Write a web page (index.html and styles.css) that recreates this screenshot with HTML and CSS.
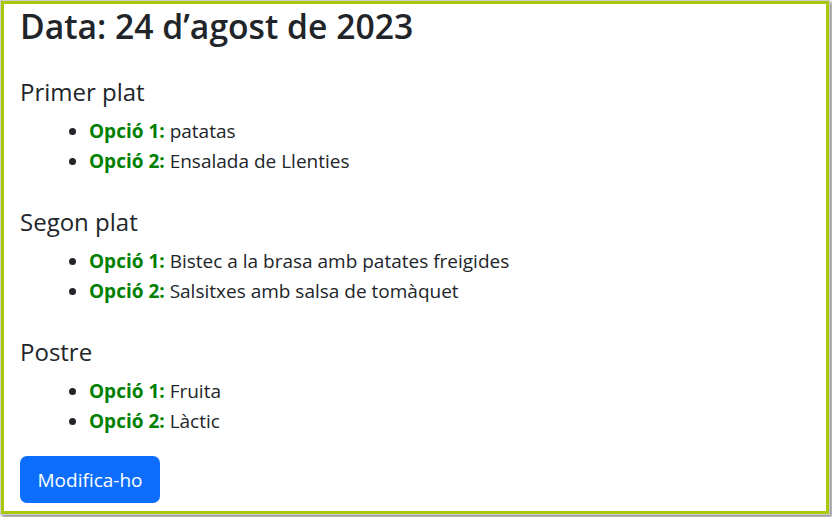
FILE: index.html
```html
<!DOCTYPE html>
<html lang="ca">
<head>
<meta charset="utf-8">
<title>Menú</title>
<link rel="stylesheet" href="styles.css">
</head>
<body>
<div class="frame">
  <h1 class="title">Data: 24 d’agost de 2023</h1>
  <h2 class="course">Primer plat</h2>
  <ul class="options">
    <li><strong class="opt">Opció 1:</strong> patatas</li>
    <li><strong class="opt">Opció 2:</strong> Ensalada de Llenties</li>
  </ul>
  <h2 class="course">Segon plat</h2>
  <ul class="options">
    <li><strong class="opt">Opció 1:</strong> Bistec a la brasa amb patates freigides</li>
    <li><strong class="opt">Opció 2:</strong> Salsitxes amb salsa de tomàquet</li>
  </ul>
  <h2 class="course">Postre</h2>
  <ul class="options">
    <li><strong class="opt">Opció 1:</strong> Fruita</li>
    <li><strong class="opt">Opció 2:</strong> Làctic</li>
  </ul>
  <button class="btn" type="button">Modifica-ho</button>
</div>
</body>
</html>
```
FILE: styles.css
```css
html, body {
  margin: 0;
  padding: 0;
  background: #ffffff;
}
body {
  font-family: "Open Sans", "Noto Sans", sans-serif;
  color: #212529;
  width: 832px;
  height: 517px;
  overflow: hidden;
}
.frame {
  box-sizing: border-box;
  margin: 1px 0 0 1px;
  width: 828px;
  height: 513px;
  border: 3px solid #a8c80c;
  box-shadow: 0 0 0 1px #cfcfcf, 2px 2px 3px 1px #8a8a8a;
  padding: 0 16px;
}
.title {
  margin: 0 0 29px 0;
  font-size: 33.7px;
  font-weight: 600;
  line-height: 44px;
}
.course {
  margin: 0 0 9px 0;
  font-size: 24px;
  font-weight: 500;
  line-height: 30px;
}
.options {
  margin: 0 0 31px 0;
  padding-left: 69px;
  font-size: 19px;
  line-height: 30px;
}
.options:last-of-type {
  margin-bottom: 20px;
}
.opt {
  color: #008000;
  font-weight: 700;
}
.btn {
  display: block;
  box-sizing: border-box;
  width: 140px;
  height: 47px;
  border: none;
  border-radius: 7px;
  background: #0d6efd;
  color: #ffffff;
  font-family: inherit;
  font-size: 19px;
  line-height: 30px;
  padding: 0;
}
```
